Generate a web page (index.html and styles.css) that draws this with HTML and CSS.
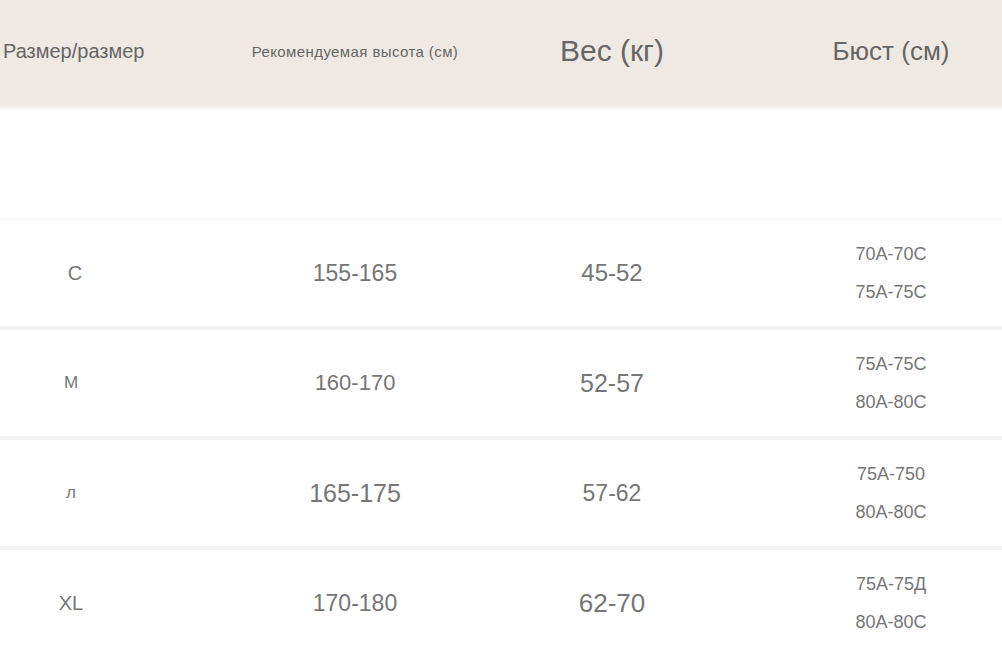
FILE: index.html
```html
<!DOCTYPE html>
<html lang="ru">
<head>
  <meta charset="UTF-8" />
  <meta name="viewport" content="width=device-width, initial-scale=1.0"/>
  <title>Таблица размеров</title>
  <link rel="stylesheet" href="styles.css">
</head>
<body>
  <div class="chart">
    <div class="head">
      <div class="cell"><span class="h-size">Размер/размер</span></div>
      <div class="cell"><span class="h-height">Рекомендуемая высота (см)</span></div>
      <div class="cell"><span class="h-weight">Вес (кг)</span></div>
      <div class="cell bust"><span class="h-bust">Бюст (см)</span></div>
    </div>

    <div class="rows">
      <div class="row">
        <div class="cell"><span class="size s-c">C</span></div>
        <div class="cell"><span class="num n-23">155-165</span></div>
        <div class="cell"><span class="num n-24">45-52</span></div>
        <div class="cell bust">
          <span class="cup">70A-70C</span>
          <span class="cup">75A-75C</span>
        </div>
      </div>

      <div class="row">
        <div class="cell"><span class="size s-m">M</span></div>
        <div class="cell"><span class="num n-22">160-170</span></div>
        <div class="cell"><span class="num n-25">52-57</span></div>
        <div class="cell bust">
          <span class="cup">75A-75C</span>
          <span class="cup">80A-80C</span>
        </div>
      </div>

      <div class="row">
        <div class="cell"><span class="size s-l">л</span></div>
        <div class="cell"><span class="num n-25">165-175</span></div>
        <div class="cell"><span class="num n-23">57-62</span></div>
        <div class="cell bust">
          <span class="cup">75A-750</span>
          <span class="cup">80A-80C</span>
        </div>
      </div>

      <div class="row">
        <div class="cell"><span class="size s-xl">XL</span></div>
        <div class="cell"><span class="num n-23">170-180</span></div>
        <div class="cell"><span class="num n-26">62-70</span></div>
        <div class="cell bust">
          <span class="cup">75A-75Д</span>
          <span class="cup">80A-80C</span>
        </div>
      </div>
    </div>
  </div>
</body>
</html>
```

FILE: styles.css
```css
:root {
  --beige: #eeeae3;
  --head-text: #666666;
  --text: #767676;
  --divider: #f3f3f3;
}

body {
  margin: 0;
  background: #ffffff;
  font-family: "Liberation Sans", Arial, sans-serif;
  color: var(--text);
  overflow: hidden;
}

.chart {
  width: 1002px;
}

.head,
.row {
  display: grid;
  grid-template-columns: 142px 426px 88px 346px;
}

.head {
  height: 112px;
  padding-bottom: 10px;
  box-sizing: border-box;
  background: linear-gradient(to bottom, var(--beige) 0, var(--beige) 105px, #fbfaf8 109px, #ffffff 112px);
  color: var(--head-text);
}

.cell {
  display: flex;
  flex-direction: column;
  align-items: center;
  justify-content: center;
  white-space: nowrap;
}

.head .cell:first-child {
  align-items: flex-start;
  padding-left: 3px;
}

.bust {
  padding-left: 124px;
}

.h-size {
  font-size: 20px;
}

.h-height {
  font-size: 15px;
  letter-spacing: 0.4px;
}

.h-weight {
  font-size: 30px;
}

.h-bust {
  font-size: 26px;
}

.rows {
  margin-top: 108px;
}

.row {
  height: 106px;
  border-bottom: 4px solid var(--divider);
}

.row:first-child {
  box-shadow: 0 -1px 0 #fafafa;
}

.size {
  font-size: 17px;
}

.s-c {
  font-size: 20px;
  margin-left: 8px;
}

.s-xl {
  font-size: 20px;
}

.num {
  line-height: 1;
}

.n-22 { font-size: 22px; }
.n-23 { font-size: 23px; }
.n-24 { font-size: 24px; }
.n-25 { font-size: 25px; }
.n-26 { font-size: 26px; }

.cup {
  font-size: 18px;
  line-height: 38px;
}
```
